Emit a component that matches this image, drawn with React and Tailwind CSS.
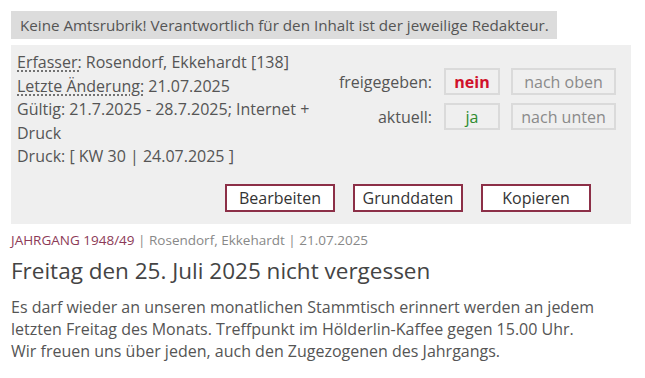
import React from 'react';

const StatusRow = ({ label, value, valueClass, action }) => (
  <div className="flex items-center">
    <span className="w-[111px] text-right pr-[12px]">{label}</span>
    <span className={`w-[56px] h-[27px] border-2 border-[#dadada] flex items-center justify-center ${valueClass}`}>
      {value}
    </span>
    <span className="ml-[11px] w-[105px] h-[27px] border-2 border-[#dadada] flex items-center justify-center text-[#8a8a8a]">
      {action}
    </span>
  </div>
);

const ActionButton = ({ children }) => (
  <button className="w-[110px] h-[28px] bg-white border-2 border-[#8c2f47] text-[#333] flex items-center justify-center">
    {children}
  </button>
);

const App = () => {
  return (
    <div className="w-[645px] h-[378px] bg-white px-[11px] pt-[11px] text-[#555] font-['Open_Sans',sans-serif] overflow-hidden">
      <div className="w-[546px] h-[28px] bg-[#dcdcdc] px-[9px] flex items-center text-[15.2px] whitespace-nowrap">
        Keine Amtsrubrik! Verantwortlich für den Inhalt ist der jeweilige Redakteur.
      </div>

      <div className="mt-[6px] w-[620px] bg-[#efefef] pl-[6px] pt-[6px] pb-[12px] text-[16px] leading-[23.5px]">
        <div className="flex">
          <div className="w-[305px]">
            <div>
              <span className="underline decoration-dotted decoration-[#555] underline-offset-[3px]">Erfasser:</span> Rosendorf, Ekkehardt [138]
            </div>
            <div>
              <span className="underline decoration-dotted decoration-[#555] underline-offset-[3px]">Letzte Änderung:</span> 21.07.2025
            </div>
            <div>Gültig: 21.7.2025 - 28.7.2025; Internet + Druck</div>
            <div>Druck: [ KW 30 | 24.07.2025 ]</div>
          </div>
          <div className="ml-[11px] mt-[17px] flex flex-col gap-[8px] leading-none">
            <StatusRow label="freigegeben:" value="nein" valueClass="text-[#d0112b] font-bold" action="nach oben" />
            <StatusRow label="aktuell:" value="ja" valueClass="text-[#2e8b2e]" action="nach unten" />
          </div>
        </div>
        <div className="mt-[15px] flex gap-[18px] pl-[208px] leading-none">
          <ActionButton>Bearbeiten</ActionButton>
          <ActionButton>Grunddaten</ActionButton>
          <ActionButton>Kopieren</ActionButton>
        </div>
      </div>

      <div className="mt-[6px] text-[13.5px] leading-[20px] text-[#888]">
        <span className="text-[#8c3a57]">JAHRGANG 1948/49</span> | Rosendorf, Ekkehardt | 21.07.2025
      </div>
      <h1 className="mt-[7px] text-[22.5px] leading-[28px] text-[#444]">
        Freitag den 25. Juli 2025 nicht vergessen
      </h1>
      <p className="mt-[11px] text-[16px] leading-[22px] text-[#555] w-[625px]">
        Es darf wieder an unseren monatlichen Stammtisch erinnert werden an jedem letzten Freitag des Monats. Treffpunkt im Hölderlin-Kaffee gegen 15.00 Uhr.<br />
        Wir freuen uns über jeden, auch den Zugezogenen des Jahrgangs.
      </p>
    </div>
  );
};

export default App;
